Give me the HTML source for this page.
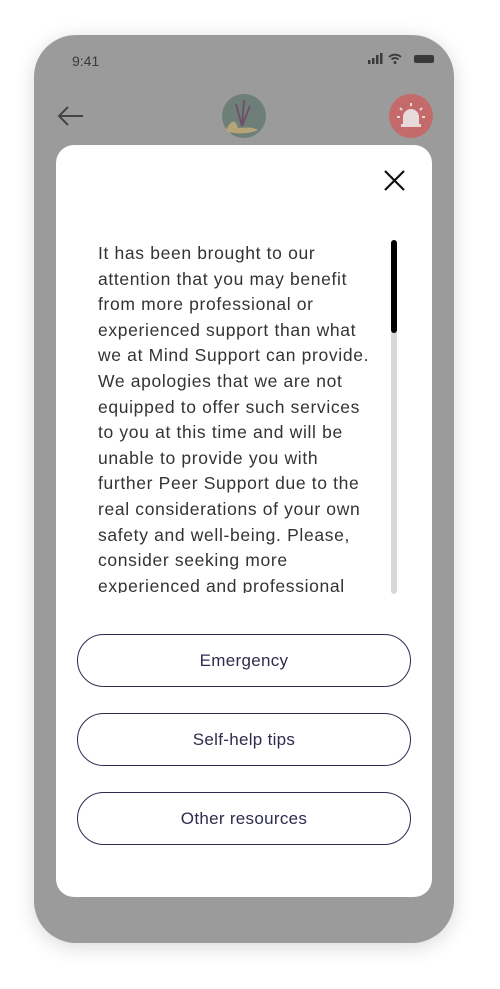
<!DOCTYPE html>
<html><head><meta charset="utf-8"><style>
*{margin:0;padding:0;box-sizing:border-box}
body{width:500px;height:989px;background:#fff;position:relative;overflow:hidden;font-family:"Liberation Sans",sans-serif}
.phone{position:absolute;left:34px;top:35px;width:420px;height:908px;border-radius:42px;background:#9b9b9b;box-shadow:0 4px 20px rgba(0,0,0,0.15)}
.time{position:absolute;left:72px;top:53px;font-size:14px;color:#3a3a3a}
.modal{position:absolute;left:56px;top:145px;width:376px;height:752px;background:#fff;border-radius:18px}
.txt{position:absolute;left:98px;top:241px;font-size:17.5px;line-height:25.6px;color:#333;letter-spacing:0.65px;white-space:nowrap;height:352px;overflow:hidden}
.track{position:absolute;left:391px;top:240px;width:6px;height:354px;background:#d8d8d8;border-radius:3px}
.thumb{position:absolute;left:391px;top:240px;width:6px;height:93px;background:#000;border-radius:3px}
.btn{position:absolute;left:77px;width:334px;height:53px;border:1.3px solid #2e2c4e;border-radius:27px;text-align:center;line-height:51px;font-size:17px;color:#2e2c4e;letter-spacing:0.3px}
</style></head><body>
<div class="phone"></div>
<div class="time">9:41</div>
<svg style="position:absolute;left:366px;top:52px" width="72" height="14">
<rect x="2" y="8" width="2.5" height="4" fill="#3a3a3a"/><rect x="6" y="6" width="2.5" height="6" fill="#3a3a3a"/><rect x="10" y="3" width="2.5" height="9" fill="#3a3a3a"/><rect x="14" y="1" width="2.5" height="11" fill="#3a3a3a"/>
<path d="M23 5a9 9 0 0 1 12 0M25.5 7.5a5 5 0 0 1 7 0" stroke="#3a3a3a" stroke-width="1.8" fill="none"/><circle cx="29" cy="10.5" r="1.5" fill="#3a3a3a"/>
<rect x="48" y="3" width="20" height="8" rx="2" fill="#3a3a3a"/>
</svg>
<svg style="position:absolute;left:56px;top:104px" width="30" height="24"><path d="M27 12H3M12 3L3 12l9 9" stroke="#444" stroke-width="2" fill="none"/></svg>
<svg style="position:absolute;left:222px;top:94px" width="44" height="44"><circle cx="22" cy="22" r="22" fill="#6d7f78"/><path d="M14 10l6 22M22 6l-2 26M28 12l-8 20" stroke="#6e5368" stroke-width="2" fill="none"/><path d="M4 36c6-12 10-10 12-2 6 0 12-2 20 2-8 4-20 4-30 2z" fill="#b6a479"/></svg>
<svg style="position:absolute;left:389px;top:94px" width="44" height="44"><circle cx="22" cy="22" r="22" fill="#c56a6a"/><path d="M14 30v-7a8 8 0 0 1 16 0v7z" fill="#e6dada"/><rect x="12" y="30" width="20" height="3" fill="#e6dada"/><path d="M22 9v3M11 14l2 2M33 14l-2 2M8 23h3M33 23h3" stroke="#e6dada" stroke-width="2"/></svg>
<div class="modal"></div>
<svg style="position:absolute;left:383px;top:169px" width="23" height="23"><path d="M2 2l19 19M21 2L2 21" stroke="#111" stroke-width="2.2"/></svg>
<div class="txt">It has been brought to our<br>attention that you may benefit<br>from more professional or<br>experienced support than what<br>we at Mind Support can provide.<br>We apologies that we are not<br>equipped to offer such services<br>to you at this time and will be<br>unable to provide you with<br>further Peer Support due to the<br>real considerations of your own<br>safety and well-being. Please,<br>consider seeking more<br>experienced and professional</div>
<div class="track"></div><div class="thumb"></div>
<div class="btn" style="top:634px">Emergency</div>
<div class="btn" style="top:713px">Self-help tips</div>
<div class="btn" style="top:792px">Other resources</div>
</body></html>
